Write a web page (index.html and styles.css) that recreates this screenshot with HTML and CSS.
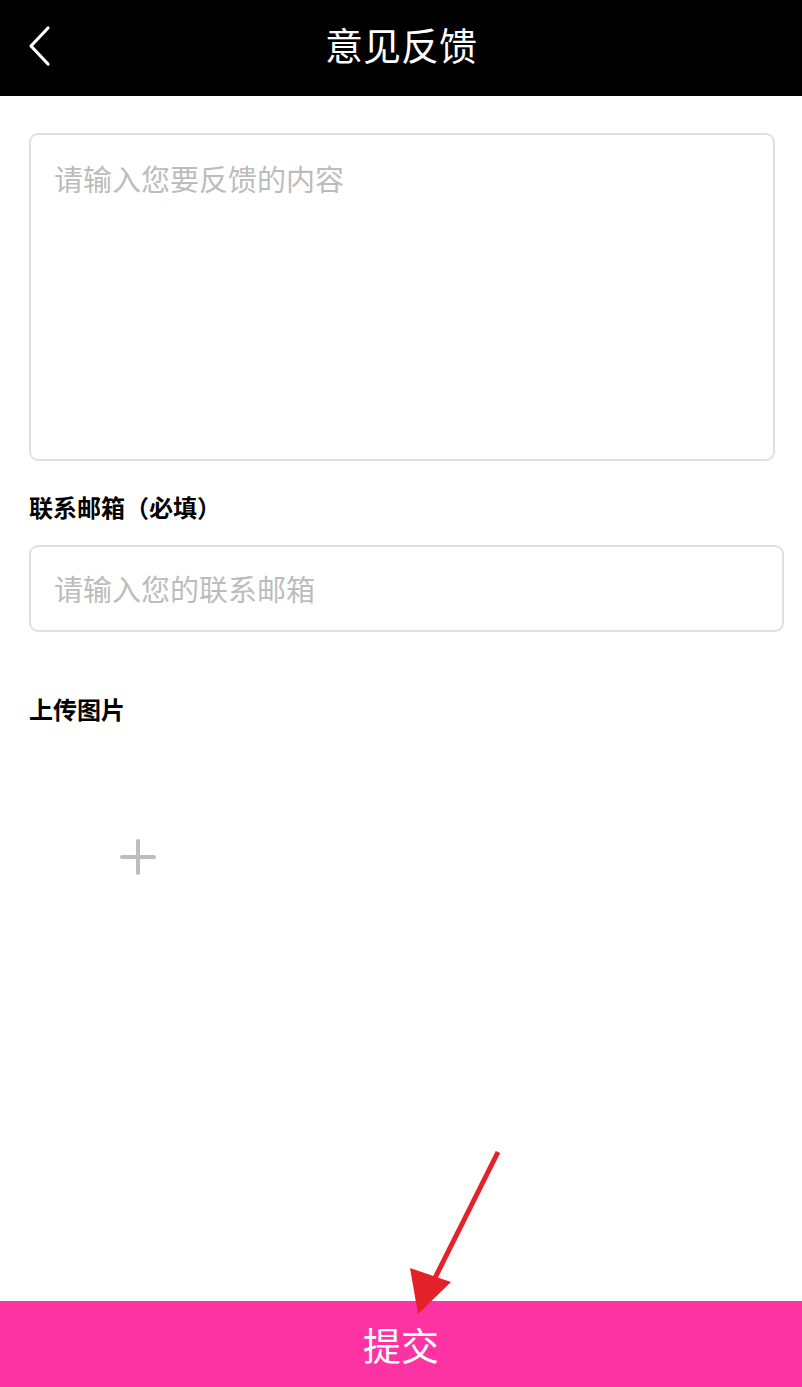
FILE: index.html
```html
<!DOCTYPE html>
<html lang="zh-CN">
<head>
<meta charset="utf-8">
<title>意见反馈</title>
<link rel="stylesheet" href="styles.css">
</head>
<body>
<div class="page">
  <header class="topbar">
    <span class="back" aria-label="返回">
      <svg width="30" height="44" viewBox="0 0 30 44"><polyline points="22,4 5,22 22,40" fill="none" stroke="#fff" stroke-width="3.2" stroke-linecap="round" stroke-linejoin="round"/></svg>
    </span>
    <h1 class="title">意见反馈</h1>
  </header>
  <main class="content">
    <div class="field field-area"><span class="ph">请输入您要反馈的内容</span></div>
    <div class="label label-email">联系邮箱（必填）</div>
    <div class="field field-input"><span class="ph">请输入您的联系邮箱</span></div>
    <div class="label label-upload">上传图片</div>
    <div class="upload">
      <svg width="36" height="36" viewBox="0 0 36 36"><path d="M18 2V34M2 18H34" stroke="#bdbdbd" stroke-width="4" stroke-linecap="round"/></svg>
    </div>
  </main>
  <button class="submit">提交</button>
  <svg class="arrow" width="120" height="180" viewBox="0 0 120 180">
    <line x1="100" y1="4" x2="33" y2="138" stroke="#e3222a" stroke-width="5"/>
    <polygon points="20,166 12,120 53,134" fill="#e3222a"/>
  </svg>
</div>
</body>
</html>
```
FILE: styles.css
```css
* { box-sizing: border-box; }
html, body { margin: 0; padding: 0; background: #fff; }
body {
  font-family: "Noto Sans CJK SC", "Noto Sans", sans-serif;
  color: #000;
}
.page {
  position: relative;
  display: flex;
  flex-direction: column;
  min-height: 100vh;
  height: 1387px;
}
.topbar {
  position: relative;
  height: 96px;
  background: #000;
  display: flex;
  align-items: center;
  justify-content: center;
  flex: none;
}
.back {
  position: absolute;
  left: 26px;
  top: 24px;
  display: block;
  line-height: 0;
}
.title {
  margin: 0 0 8px;
  font-size: 38px;
  font-weight: 400;
  color: #fff;
  line-height: 1;
}
.content {
  flex: 1;
  padding: 37px 0 0 29px;
  display: flex;
  flex-direction: column;
  align-items: flex-start;
}
.field {
  border: 2px solid #e0e0e0;
  border-radius: 9px;
  background: #fff;
}
.ph {
  font-size: 29px;
  color: #bcbcbc;
  line-height: 36px;
}
.field-area {
  width: 746px;
  height: 328px;
  padding: 25px 0 0 23px;
}
.field-input {
  width: 755px;
  height: 87px;
  padding: 0 0 2px 23px;
  display: flex;
  align-items: center;
}
.label {
  font-size: 24px;
  font-weight: 700;
  line-height: 30px;
}
.label-email { margin-top: 31px; }
.field-input { margin-top: 23px; }
.label-upload { margin-top: 62px; }
.upload {
  margin: 58px 0 0 34px;
  width: 150px;
  height: 150px;
  display: flex;
  align-items: center;
  justify-content: center;
}
.submit {
  flex: none;
  height: 86px;
  width: 100%;
  border: 0;
  margin: 0;
  background: #fe33a3;
  color: #fff;
  font-family: "Noto Sans CJK SC", sans-serif;
  font-size: 38px;
  font-weight: 400;
  padding: 0 0 2px;
}
.arrow {
  position: absolute;
  left: 398px;
  top: 1148px;
}
```
